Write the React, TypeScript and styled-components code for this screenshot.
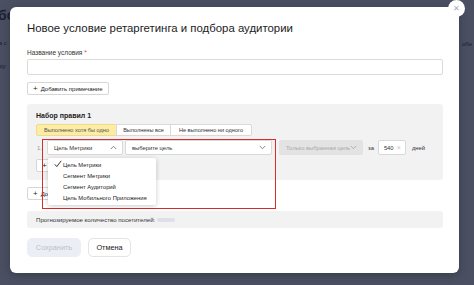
import styled, { createGlobalStyle } from 'styled-components';

const GlobalStyle = createGlobalStyle`
  html, body {
    margin: 0;
    padding: 0;
    background: #4a5062;
  }
  * {
    box-sizing: border-box;
  }
`;

const FONT = `"Liberation Sans", Arial, sans-serif`;

const Stage = styled.div`
  position: relative;
  width: 474px;
  height: 285px;
  overflow: hidden;
  background: #4a5062;
  font-family: ${FONT};
  white-space: nowrap;
  padding: 7px 0 0 10px;
`;

const BehindText = styled.div<{ $top: number; $left: number; $size: number; $bold?: boolean }>`
  position: absolute;
  top: ${(p) => p.$top}px;
  left: ${(p) => p.$left}px;
  font-size: ${(p) => p.$size}px;
  font-weight: ${(p) => (p.$bold ? 700 : 400)};
  color: #1d2230;
`;

const Modal = styled.div`
  position: relative;
  width: 449px;
  background: #fff;
  border-radius: 6px;
  padding: 11px 16px 16px 17px;
  box-shadow: 0 2px 10px rgba(0, 0, 0, 0.25);
`;

const CloseButton = styled.div`
  position: absolute;
  top: -7px;
  right: -6px;
  width: 17px;
  height: 17px;
  border-radius: 50%;
  background: #fff;
  color: #a8abb2;
  font-size: 8px;
  display: flex;
  align-items: center;
  justify-content: center;
`;

const Title = styled.h1`
  margin: 0;
  font-size: 11.4px;
  line-height: 20px;
  font-weight: 400;
  color: #222;
`;

const FieldLabel = styled.div`
  margin-top: 10px;
  font-size: 6.5px;
  line-height: 10px;
  color: #333;
  span {
    color: #e0463b;
  }
`;

const TextInput = styled.div`
  margin-top: 1px;
  height: 16px;
  border: 1px solid #dadada;
  border-radius: 2px;
`;

const GhostButton = styled.div<{ $mt: number }>`
  margin-top: ${(p) => p.$mt}px;
  display: inline-flex;
  align-items: center;
  gap: 3px;
  height: 13px;
  padding: 0 5px;
  border: 1px solid #d6d6d6;
  border-radius: 2px;
  background: #fff;
  font-size: 6px;
  color: #222;
  b {
    font-weight: 400;
    font-size: 8px;
  }
`;

const Block = styled.div`
  display: flex;
  flex-direction: column;
  align-items: flex-start;
`;

const Panel = styled.div`
  margin-top: 9px;
  background: #f2f2f2;
  border-radius: 3px;
  padding: 6px 9px 8px;
  display: flex;
  flex-direction: column;
  align-items: flex-start;
`;

const PanelTitle = styled.div`
  font-size: 7px;
  line-height: 11px;
  font-weight: 700;
  color: #222;
`;

const Tabs = styled.div`
  margin-top: 3px;
  display: flex;
  height: 12px;
`;

const Tab = styled.div<{ $active?: boolean; $w: number }>`
  width: ${(p) => p.$w}px;
  display: flex;
  align-items: center;
  justify-content: center;
  font-size: 5.6px;
  color: ${(p) => (p.$active ? '#555' : '#333')};
  background: ${(p) => (p.$active ? '#fdeca4' : '#fff')};
  border: 1px solid ${(p) => (p.$active ? '#eedc8e' : '#d9d9d9')};
  margin-left: -1px;
  &:first-child {
    margin-left: 0;
    border-radius: 2px 0 0 2px;
  }
  &:last-child {
    border-radius: 0 2px 2px 0;
  }
`;

const RuleRow = styled.div`
  position: relative;
  margin-top: 4px;
  display: flex;
  align-items: center;
  height: 15px;
  width: 100%;
`;

const RowNumber = styled.div`
  width: 11px;
  font-size: 6px;
  color: #999;
  padding-left: 1px;
`;

const Select = styled.div<{ $w: number; $disabled?: boolean; $ml?: number }>`
  position: relative;
  width: ${(p) => p.$w}px;
  margin-left: ${(p) => p.$ml ?? 0}px;
  height: 15px;
  display: flex;
  align-items: center;
  justify-content: space-between;
  padding: 0 5px 0 6px;
  font-size: 5.8px;
  color: ${(p) => (p.$disabled ? '#a9a9a9' : '#333')};
  background: ${(p) => (p.$disabled ? '#e3e3e3' : '#fff')};
  border: 1px solid ${(p) => (p.$disabled ? '#e3e3e3' : '#d9d9d9')};
  border-radius: 2px;
`;

const Chevron = ({ up, color = '#777' }: { up?: boolean; color?: string }) => (
  <svg width="7" height="5" viewBox="0 0 7 5">
    <path
      d={up ? 'M0.8 4 L3.5 1.3 L6.2 4' : 'M0.8 1 L3.5 3.7 L6.2 1'}
      fill="none"
      stroke={color}
      strokeWidth="0.9"
    />
  </svg>
);

const InlineText = styled.div<{ $ml: number }>`
  margin-left: ${(p) => p.$ml}px;
  font-size: 5.8px;
  color: #333;
`;

const DaysInput = styled.div`
  margin-left: 4px;
  width: 28px;
  height: 15px;
  background: #fff;
  border: 1px solid #d9d9d9;
  border-radius: 2px;
  display: flex;
  align-items: center;
  justify-content: space-between;
  padding: 0 4px 0 5px;
  font-size: 5.8px;
  color: #333;
  span {
    color: #c4c4c4;
    font-size: 7px;
  }
`;

const Menu = styled.div`
  position: absolute;
  top: 17px;
  left: 0;
  width: 108px;
  z-index: 3;
  background: #fff;
  border-radius: 2px;
  box-shadow: 0 1px 5px rgba(0, 0, 0, 0.22);
  padding: 1px 0 2px;
`;

const MenuItem = styled.div`
  height: 11px;
  display: flex;
  align-items: center;
  padding-left: 15px;
  position: relative;
  font-size: 5.8px;
  color: #222;
`;

const Check = styled.svg`
  position: absolute;
  left: 6px;
  top: 1px;
`;

const Highlight = styled.div`
  position: absolute;
  left: 6px;
  top: -1px;
  width: 234px;
  height: 70px;
  border: 1.5px solid #d52c2c;
  z-index: 2;
  pointer-events: none;
`;

const Forecast = styled.div`
  margin-top: 11px;
  height: 17px;
  background: #f2f2f2;
  border-radius: 3px;
  display: flex;
  align-items: center;
  padding-left: 9px;
  gap: 2px;
  font-size: 6.1px;
  color: #333;
`;

const Placeholder = styled.div`
  width: 18px;
  height: 4px;
  border-radius: 2px;
  background: #dde0e6;
`;

const Actions = styled.div`
  margin-top: 10px;
  display: flex;
  gap: 7px;
`;

const ActionButton = styled.div<{ $primary?: boolean; $w: number }>`
  width: ${(p) => p.$w}px;
  height: 19px;
  border-radius: 5px;
  display: flex;
  align-items: center;
  justify-content: center;
  font-size: 7.3px;
  color: ${(p) => (p.$primary ? '#b9c1cc' : '#222')};
  background: ${(p) => (p.$primary ? '#ebeff5' : '#fff')};
  border: 1px solid ${(p) => (p.$primary ? '#ebeff5' : '#e4e4e4')};
`;

const menuItems = ['Цель Метрики', 'Сегмент Метрики', 'Сегмент Аудиторий', 'Цель Мобильного Приложения'];

export default function App() {
  return (
    <>
      <GlobalStyle />
      <Stage>
        <BehindText $top={7} $left={-2} $size={14} $bold>бо</BehindText>
        <BehindText $top={40} $left={-4} $size={6}>ка с</BehindText>
        <BehindText $top={63} $left={-4} $size={6}>еду</BehindText>
        <BehindText $top={41} $left={462} $size={6}>обе</BehindText>
        <Modal>
          <CloseButton>✕</CloseButton>
          <Title>Новое условие ретаргетинга и подбора аудитории</Title>
          <FieldLabel>
            Название условия <span>*</span>
          </FieldLabel>
          <TextInput />
          <Block>
            <GhostButton $mt={7}>
              <b>+</b>Добавить примечание
            </GhostButton>
          </Block>
          <Panel>
            <PanelTitle>Набор правил 1</PanelTitle>
            <Tabs>
              <Tab $active $w={81}>Выполнено хотя бы одно</Tab>
              <Tab $w={55}>Выполнены все</Tab>
              <Tab $w={82}>Не выполнено ни одного</Tab>
            </Tabs>
            <RuleRow>
              <RowNumber>1.</RowNumber>
              <Select $w={76}>
                Цель Метрики
                <Chevron up />
                <Menu>
                  {menuItems.map((item, i) => (
                    <MenuItem key={item}>
                      {i === 0 && (
                        <Check width="8" height="8" viewBox="0 0 8 8">
                          <path d="M0.8 4.3 L2.8 6.6 L7.2 0.8" fill="none" stroke="#222" strokeWidth="0.9" />
                        </Check>
                      )}
                      {item}
                    </MenuItem>
                  ))}
                </Menu>
              </Select>
              <Select $w={147} $ml={2}>
                выберите цель
                <Chevron />
              </Select>
              <Select $w={84} $ml={7} $disabled>
                Только выбранная цель
                <Chevron color="#aaa" />
              </Select>
              <InlineText $ml={5}>за</InlineText>
              <DaysInput>
                540<span>×</span>
              </DaysInput>
              <InlineText $ml={6}>дней</InlineText>
              <Highlight />
            </RuleRow>
            <GhostButton $mt={4}>
              <b>+</b>Добавить условие
            </GhostButton>
          </Panel>
          <Block>
            <GhostButton $mt={7}>
              <b>+</b>Добавить набор правил
            </GhostButton>
          </Block>
          <Forecast>
            Прогнозируемое количество посетителей:
            <Placeholder />
          </Forecast>
          <Actions>
            <ActionButton $primary $w={54}>Сохранить</ActionButton>
            <ActionButton $w={43}>Отмена</ActionButton>
          </Actions>
        </Modal>
      </Stage>
    </>
  );
}
